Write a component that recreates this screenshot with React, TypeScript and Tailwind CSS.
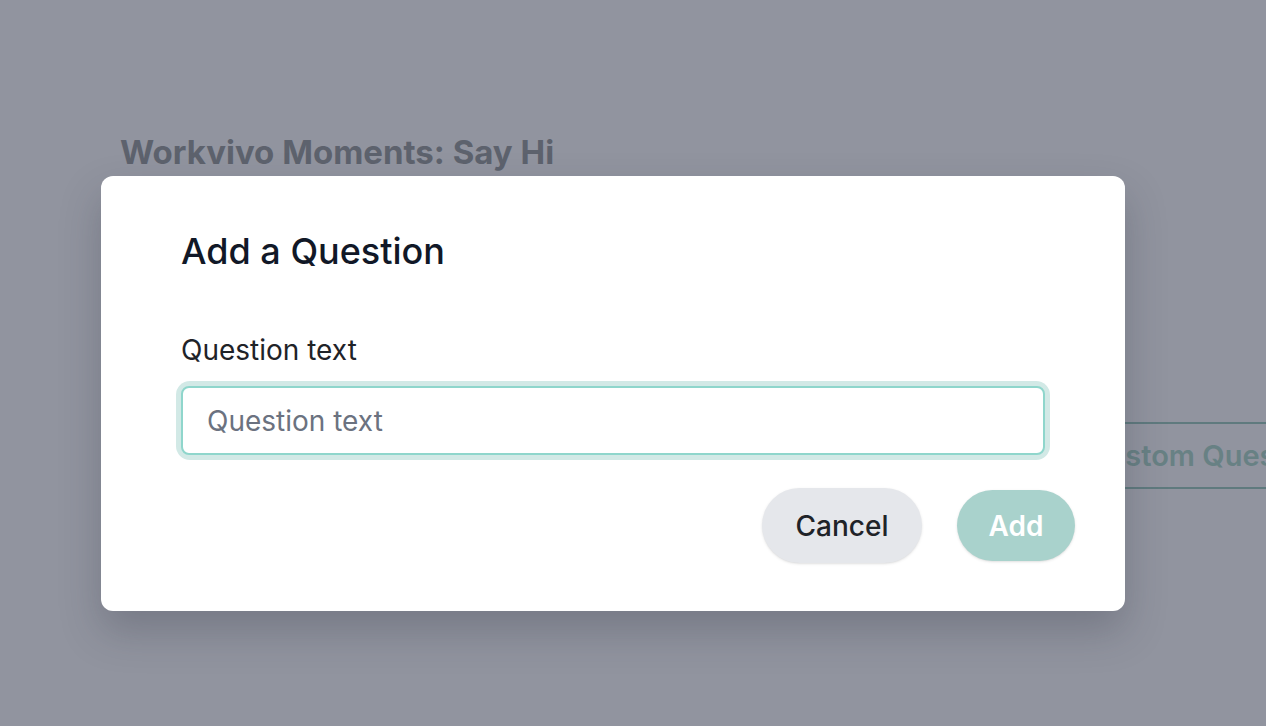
import React from 'react';

const font = { fontFamily: 'Inter, "Noto Sans", sans-serif' };

export default function App() {
  return (
    <div className="relative h-[726px] w-[1266px] overflow-hidden bg-[#91949f]" style={font}>
      {/* Page behind the overlay (already dimmed) */}
      <div className="pl-[120px] pt-[132px]">
        <h1 className="text-[33px] font-bold leading-[40px] text-[#5d626d]">Workvivo Moments: Say Hi</h1>
        <div className="mt-[250px] flex">
          <div className="ml-[880px] flex h-[67px] w-[400px] items-center border-y-2 border-[#5f7a7e] pl-[22px] text-[29px] font-semibold text-[#688184] whitespace-nowrap">
            Add Custom Question
          </div>
        </div>
      </div>

      {/* Modal */}
      <div className="absolute inset-0 pl-[101px] pt-[176px]">
        <div className="w-[1024px] rounded-xl bg-white pl-[80px] pr-[50px] pt-[53px] pb-[48px] shadow-[0_20px_40px_rgba(40,44,60,0.25)]">
          <h2 className="text-[36px] font-medium leading-[44px] text-[#111827]">Add a Question</h2>
          <label className="mt-[60px] block text-[28px] leading-[34px] text-[#1f2328]">Question text</label>
          <div className="mt-[14px] w-[874px] -ml-[5px] rounded-[14px] bg-[#d2e9e6] p-[5px]">
            <input
              placeholder="Question text"
              className="block h-[69px] w-full rounded-[8px] border-2 border-[#8fd6cc] bg-white px-[24px] text-[28px] text-[#111827] outline-none placeholder:text-[#6b7280]"
              style={font}
            />
          </div>
          <div className="mt-[28px] flex justify-end gap-[35px]">
            <button className="h-[75px] w-[160px] rounded-full bg-[#e5e7eb] text-[28px] font-medium text-[#1f2328] shadow-sm">
              Cancel
            </button>
            <button className="mt-[2px] h-[71px] w-[118px] rounded-full bg-[#a9d2cc] text-[28px] font-semibold text-white shadow-sm">
              Add
            </button>
          </div>
        </div>
      </div>
    </div>
  );
}
